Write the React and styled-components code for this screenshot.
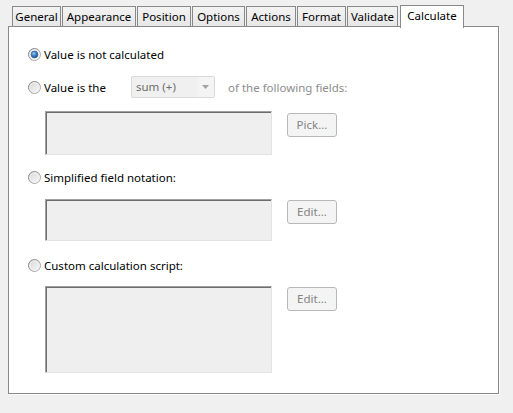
import React from "react";
import styled, { createGlobalStyle } from "styled-components";

const Global = createGlobalStyle`
  html, body { margin: 0; padding: 0; background: #f0f0f0; }
  body { font-family: "Noto Sans", "Open Sans", sans-serif; font-size: 11.5px; color: #000; }
  #root { width: 513px; height: 413px; overflow: hidden; }
`;

const Page = styled.div`
  box-sizing: border-box;
  width: 513px;
  height: 413px;
  padding: 0 14px 19px 8px;
  display: flex;
  flex-direction: column;
`;

const TabStrip = styled.div`
  display: flex;
  align-items: flex-end;
  gap: 1px;
  height: 27px;
  padding-left: 4px;
  box-sizing: border-box;
`;

const Tab = styled.div`
  box-sizing: border-box;
  width: ${(p) => p.$w}px;
  height: ${(p) => (p.$active ? 23 : 21)}px;
  margin-left: ${(p) => (p.$active ? 1 : 0)}px;
  border: 1px solid #898989;
  border-bottom: none;
  background: ${(p) =>
    p.$active ? "#fff" : "linear-gradient(#f3f3f3, #e6e6e6)"};
  display: flex;
  justify-content: center;
  align-items: ${(p) => (p.$active ? "flex-start" : "center")};
  padding-top: ${(p) => (p.$active ? 2 : 0)}px;
  padding-bottom: ${(p) => (p.$active ? 0 : 1)}px;
  position: relative;
  z-index: ${(p) => (p.$active ? 2 : 0)};
  white-space: nowrap;
  line-height: 16px;
  margin-bottom: ${(p) => (p.$active ? -1 : 0)}px;
`;

const Panel = styled.div`
  box-sizing: border-box;
  flex: 1;
  margin-top: -1px;
  background: #fff;
  border: 1px solid #898989;
  box-shadow: 1px 1px 0 #fbfbfb;
  padding: 17px 0 0 19px;
  display: flex;
  flex-direction: column;
  position: relative;
  z-index: 1;
`;

const OptionRow = styled.div`
  display: flex;
  align-items: center;
  height: ${(p) => p.$h || 20}px;
  margin-top: ${(p) => p.$mt || 0}px;
`;

const RadioLabel = styled.label`
  display: flex;
  align-items: center;
  gap: 3px;
  width: ${(p) => (p.$w ? `${p.$w}px` : "auto")};
  flex-shrink: 0;
  white-space: nowrap;
`;

const Select = styled.div`
  box-sizing: border-box;
  width: 84px;
  height: 22px;
  border: 1px solid #d9d9d9;
  border-radius: 2px;
  background: #f0f0f0;
  display: flex;
  align-items: center;
  color: #6d6d6d;
`;

const SelectValue = styled.span`
  flex: 1;
  padding-left: 4px;
  line-height: 16px;
`;

const SelectArrow = styled.span`
  width: 17px;
  height: 100%;
  display: flex;
  align-items: center;
  justify-content: center;
  background: #f4f4f4;
`;

const HintText = styled.span`
  color: #8d8d8d;
  margin-left: 13px;
  white-space: nowrap;
`;

const FieldBlock = styled.div`
  display: flex;
  align-items: flex-start;
  gap: 15px;
  margin-top: ${(p) => p.$mt || 0}px;
  padding-left: 17px;
`;

const TextArea = styled.div`
  box-sizing: border-box;
  width: 227px;
  height: ${(p) => p.$h}px;
  background: #efefef;
  border-top: 1px solid #a0a0a0;
  border-left: 1px solid #a0a0a0;
  border-right: 1px solid #e3e3e3;
  border-bottom: 1px solid #e3e3e3;
  box-shadow: inset 1px 1px 0 #6d6d6d;
`;

const Button = styled.div`
  box-sizing: border-box;
  width: 50px;
  height: 24px;
  margin-top: ${(p) => p.$mt || 0}px;
  border: 1px solid #b5b9bc;
  border-radius: 3px;
  background: #f4f4f4;
  color: #838383;
  display: flex;
  align-items: center;
  justify-content: center;
  padding-bottom: 1px;
`;

const Radio = ({ checked }) => (
  <svg width="13" height="13" viewBox="0 0 13 13">
    <defs>
      <linearGradient id="rfill" x1="0" y1="0" x2="1" y2="1">
        <stop offset="0" stopColor="#d4d4d4" />
        <stop offset="1" stopColor="#fbfbfb" />
      </linearGradient>
      <linearGradient id="rring" x1="0" y1="0" x2="1" y2="1">
        <stop offset="0" stopColor="#7b7b7b" />
        <stop offset="1" stopColor="#b8b8b8" />
      </linearGradient>
      <radialGradient id="rdot" cx="0.4" cy="0.35" r="0.7">
        <stop offset="0" stopColor="#9ccdf5" />
        <stop offset="0.5" stopColor="#3b7fc4" />
        <stop offset="1" stopColor="#1c4f86" />
      </radialGradient>
    </defs>
    <circle cx="6.5" cy="6.5" r="6" fill="url(#rfill)" stroke="url(#rring)" strokeWidth="1" />
    <circle cx="6.5" cy="6.5" r="4.6" fill="none" stroke="#f4f4f4" strokeWidth="0.8" />
    {checked && <circle cx="6.5" cy="6.5" r="3.4" fill="url(#rdot)" stroke="#2b5d8f" strokeWidth="0.6" />}
  </svg>
);

const tabs = [
  ["General", 49],
  ["Appearance", 74],
  ["Position", 54],
  ["Options", 53],
  ["Actions", 50],
  ["Format", 49],
  ["Validate", 51],
  ["Calculate", 64, true],
];

export default function App() {
  return (
    <>
      <Global />
      <Page>
        <TabStrip>
          {tabs.map(([label, w, active]) => (
            <Tab key={label} $w={w} $active={active}>
              {label}
            </Tab>
          ))}
        </TabStrip>
        <Panel>
          <OptionRow>
            <RadioLabel>
              <Radio checked />
              Value is not calculated
            </RadioLabel>
          </OptionRow>
          <OptionRow $h={22} $mt={12}>
            <RadioLabel $w={103}>
              <Radio />
              Value is the
            </RadioLabel>
            <Select>
              <SelectValue>sum (+)</SelectValue>
              <SelectArrow>
                <svg width="7" height="4" viewBox="0 0 7 4">
                  <path d="M0 0 H7 L3.5 4 Z" fill="#a3a3a3" />
                </svg>
              </SelectArrow>
            </Select>
            <HintText>of the following fields:</HintText>
          </OptionRow>
          <FieldBlock $mt={13}>
            <TextArea $h={44} />
            <Button $mt={2}>Pick...</Button>
          </FieldBlock>
          <OptionRow $mt={12}>
            <RadioLabel>
              <Radio />
              Simplified field notation:
            </RadioLabel>
          </OptionRow>
          <FieldBlock $mt={12}>
            <TextArea $h={42} />
            <Button $mt={1}>Edit...</Button>
          </FieldBlock>
          <OptionRow $mt={14}>
            <RadioLabel>
              <Radio />
              Custom calculation script:
            </RadioLabel>
          </OptionRow>
          <FieldBlock $mt={11}>
            <TextArea $h={87} />
            <Button $mt={1}>Edit...</Button>
          </FieldBlock>
        </Panel>
      </Page>
    </>
  );
}
